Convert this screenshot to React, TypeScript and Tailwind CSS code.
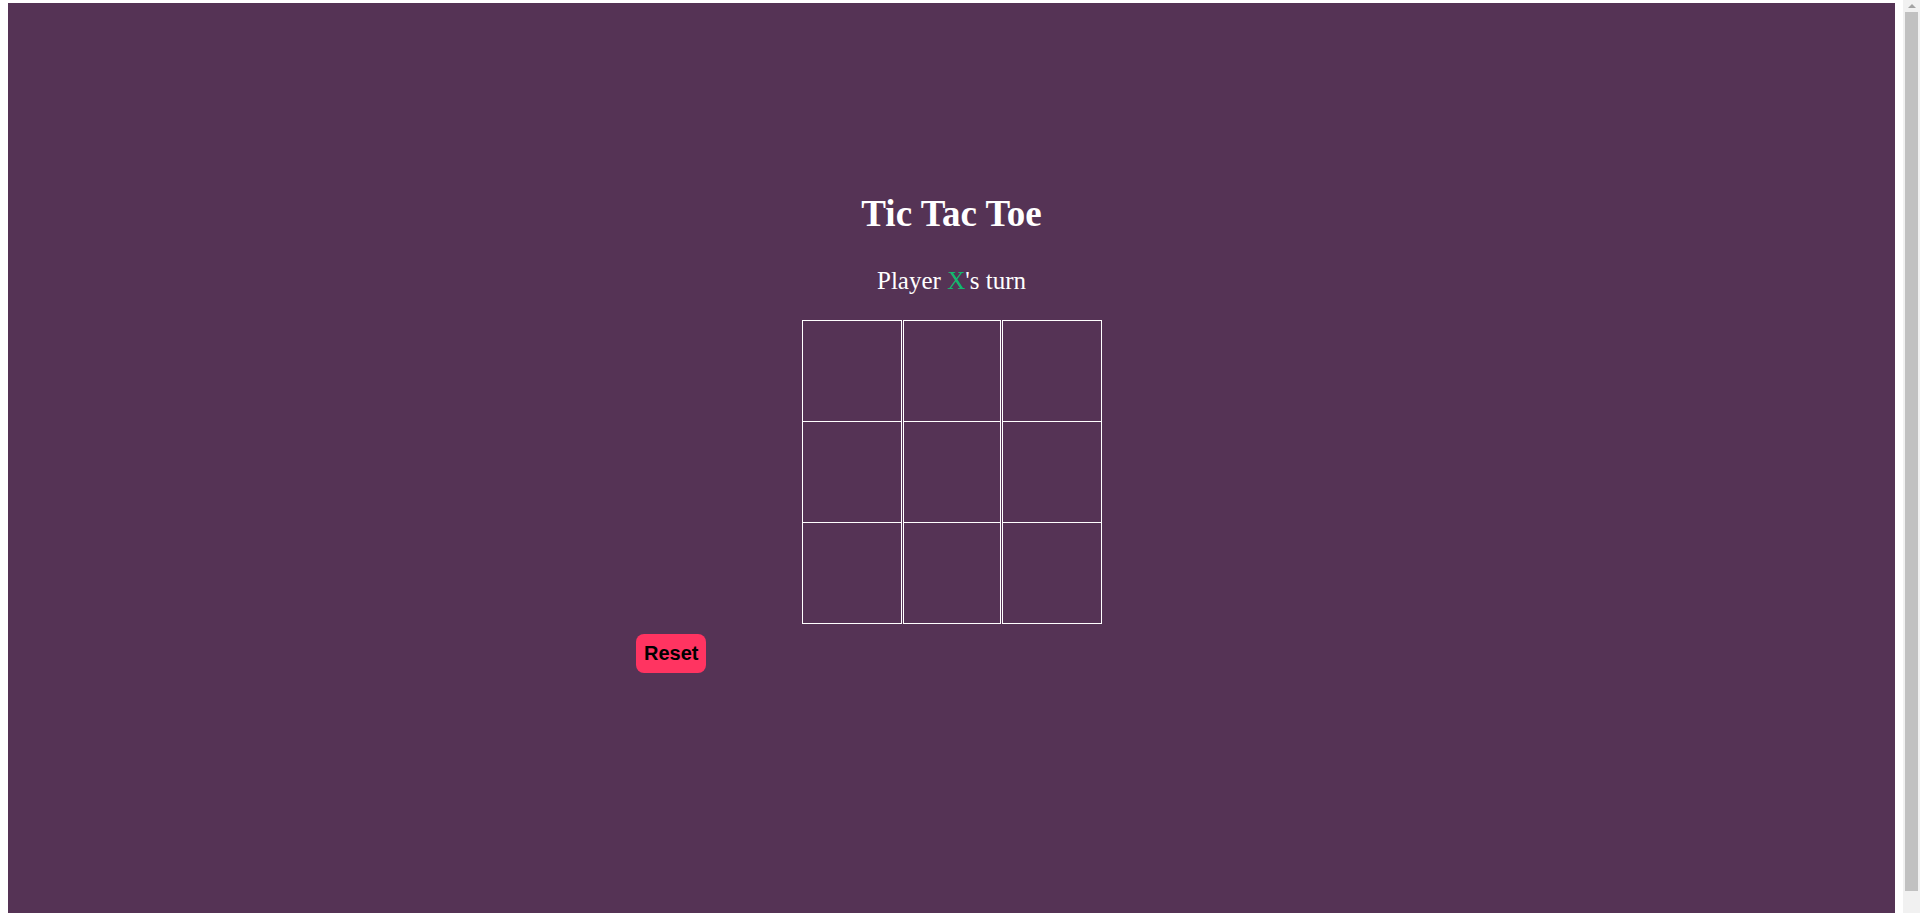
import React, { useState } from 'react';

type Mark = 'X' | 'O' | null;

function Cell({ value, onClick, first }: { value: Mark; onClick: () => void; first: boolean }) {
  return (
    <div
      onClick={onClick}
      className={`flex items-center justify-center border border-white text-white text-[48px] cursor-pointer ${first ? 'h-[102px]' : 'h-[101px] border-t-0'}`}
    >
      {value}
    </div>
  );
}

export default function App() {
  const [cells, setCells] = useState<Mark[]>(Array(9).fill(null));
  const [player, setPlayer] = useState<'X' | 'O'>('X');

  const play = (i: number) => {
    if (cells[i]) return;
    const next = [...cells];
    next[i] = player;
    setCells(next);
    setPlayer(player === 'X' ? 'O' : 'X');
  };

  const reset = () => {
    setCells(Array(9).fill(null));
    setPlayer('X');
  };

  return (
    <div className="flex h-[913px] w-full overflow-hidden bg-white">
      <div className="flex-1 px-2 pt-[3px]">
        <div className="flex h-full flex-col items-center bg-[#553355] pt-[190px] font-['Liberation_Serif','Times_New_Roman',serif] text-white">
          <h1 className="text-[37px] font-bold leading-[42px]">Tic Tac Toe</h1>
          <p className="mt-[32px] text-[25px] leading-[28px]">
            Player <span className="text-[#13b86f]">{player}</span>'s turn
          </p>
          <div className="mt-[25px] grid grid-cols-[100px_98px_100px] gap-x-px">
            {cells.map((c, i) => (
              <Cell key={i} value={c} first={i < 3} onClick={() => play(i)} />
            ))}
          </div>
          <button
            onClick={reset}
            className="mt-[10px] ml-[628px] self-start rounded-lg bg-[#ff3461] px-[8px] py-2 font-['Liberation_Sans',Arial,sans-serif] text-[20px] font-bold leading-[23px] text-black"
          >
            Reset
          </button>
        </div>
      </div>
      {/* fake browser scrollbar */}
      <div className="flex w-[17px] flex-col bg-[#f1f1f1]">
        <div className="flex h-3 items-start justify-center pt-[4px]">
          <div className="h-0 w-0 border-x-[4px] border-b-[4px] border-x-transparent border-b-[#a3a3a3]" />
        </div>
        <div className="mx-[2px] h-[879px] bg-[#c1c1c1]" />
      </div>
    </div>
  );
}
